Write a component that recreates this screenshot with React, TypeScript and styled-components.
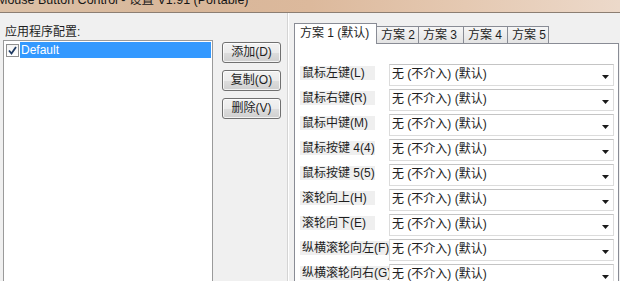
import React from "react";
import styled, { createGlobalStyle } from "styled-components";

const Global = createGlobalStyle`
  html, body { margin: 0; padding: 0; width: 620px; height: 281px; overflow: hidden; background: #f0f0f0; }
  body { font-family: "Liberation Sans", "Noto Sans CJK SC", sans-serif; font-size: 12px; color: #1e1e1e; }
  * { box-sizing: border-box; }
`;

const Window = styled.div`
  width: 620px;
  height: 281px;
  display: flex;
  flex-direction: column;
  overflow: hidden;
  background: #f0f0f0;
`;

const TitleBar = styled.div`
  height: 13px;
  flex: none;
  overflow: hidden;
  background: linear-gradient(to right, #dcc1a7 0%, #d7b699 30%, #dcb99c 50%, #e5c9b2 75%, #ecd9ca 100%);
  border-bottom: 1px solid #8c7e72;
`;

const TitleText = styled.div`
  margin: -6px 0 0 -3px;
  font-size: 12.5px;
  line-height: 12px;
  white-space: nowrap;
  color: #161616;
`;

const Body = styled.div`
  flex: 1;
  min-height: 0;
  display: flex;
  overflow: hidden;
`;

const LeftPane = styled.div`
  width: 289px;
  flex: none;
  display: flex;
  flex-direction: column;
  padding: 12px 0 0 3px;
  border-right: 1px solid #ffffff;
  box-shadow: inset -1px 0 0 #d4d4d4;
  overflow: hidden;
`;

const GroupLabel = styled.div`
  margin: 0 0 1px 2px;
  height: 14px;
  line-height: 14px;
  white-space: nowrap;
`;

const LeftBody = styled.div`
  display: flex;
  gap: 9px;
  flex: none;
`;

const ListBox = styled.div`
  width: 210px;
  height: 260px;
  flex: none;
  background: #ffffff;
  border: 1px solid #9a9a9a;
  padding-top: 1px;
`;

const ListRow = styled.div`
  display: flex;
  align-items: center;
  height: 16px;
`;

const CheckBox = styled.span`
  width: 13px;
  height: 13px;
  margin: 1px 1px 0 2px;
  flex: none;
  border: 1px solid #8f8f8f;
  background: linear-gradient(#f4f4f4, #ffffff);
  display: flex;
  align-items: center;
  justify-content: center;
`;

const RowText = styled.span<{ $selected?: boolean }>`
  flex: 1;
  height: 16px;
  margin-right: 1px;
  padding-left: 1px;
  line-height: 16px;
  background: ${(p) => (p.$selected ? "#3399ff" : "transparent")};
  color: ${(p) => (p.$selected ? "#ffffff" : "#1e1e1e")};
`;

const ButtonCol = styled.div`
  display: flex;
  flex-direction: column;
  gap: 7px;
  padding-top: 2px;
`;

const Button = styled.button`
  width: 59px;
  height: 21px;
  padding: 0;
  font: inherit;
  font-size: 12px;
  line-height: 19px;
  color: #1e1e1e;
  border: 1px solid #707070;
  border-radius: 3px;
  background: linear-gradient(#f2f2f2 0%, #ebebeb 50%, #dddddd 51%, #cfcfcf 100%);
  box-shadow: inset 0 0 0 1px rgba(255, 255, 255, 0.75);
`;

const RightPane = styled.div`
  flex: 1;
  display: flex;
  flex-direction: column;
  padding: 10px 1px 0 5px;
  overflow: hidden;
`;

const TabStrip = styled.div`
  display: flex;
  align-items: flex-end;
  height: 21px;
  margin-bottom: -1px;
  position: relative;
  z-index: 1;
`;

const Tab = styled.div<{ $active?: boolean; $w: number }>`
  width: ${(p) => p.$w}px;
  flex: none;
  height: ${(p) => (p.$active ? 21 : 17)}px;
  margin-bottom: ${(p) => (p.$active ? 0 : 1)}px;
  margin-left: ${(p) => (p.$active ? 0 : -1)}px;
  border: 1px solid #898c95;
  border-bottom: none;
  background: ${(p) => (p.$active ? "#ffffff" : "linear-gradient(#f6f6f6, #e3e3e3)")};
  padding-left: ${(p) => (p.$active ? 5 : 4)}px;
  line-height: ${(p) => (p.$active ? 19 : 16)}px;
  white-space: nowrap;
  position: relative;
  z-index: ${(p) => (p.$active ? 2 : 1)};
`;

const Panel = styled.div`
  height: 260px;
  flex: none;
  background: #ffffff;
  border: 1px solid #898c95;
  padding: 20px 4px 0 5px;
  display: flex;
  flex-direction: column;
  gap: 3px;
`;

const Row = styled.div`
  display: flex;
  height: 22px;
  flex: none;
`;

const LabelCell = styled.div`
  width: 89px;
  flex: none;
  padding-top: 2px;
`;

const LabelText = styled.span`
  display: inline-block;
  min-width: 75px;
  height: 14px;
  line-height: 14px;
  padding-left: 2px;
  background: #efefef;
  white-space: nowrap;
`;

const Combo = styled.div`
  flex: 1;
  display: flex;
  justify-content: space-between;
  align-items: center;
  border: 1px solid #dcdcdc;
  border-top-color: #c4c4c4;
  padding: 0 4px 0 2px;
  background: #ffffff;
`;

const ComboText = styled.span`
  line-height: 16px;
  margin-top: -3px;
  white-space: nowrap;
`;

const Arrow = styled.svg`
  margin-top: 4px;
  flex: none;
`;

const tabs = [
  { label: "方案 1 (默认)", w: 83, active: true },
  { label: "方案 2", w: 43 },
  { label: "方案 3", w: 46 },
  { label: "方案 4", w: 45 },
  { label: "方案 5", w: 42 },
];

const rows = [
  "鼠标左键(L)",
  "鼠标右键(R)",
  "鼠标中键(M)",
  "鼠标按键 4(4)",
  "鼠标按键 5(5)",
  "滚轮向上(H)",
  "滚轮向下(E)",
  "纵横滚轮向左(F)",
  "纵横滚轮向右(G)",
];

export default function App() {
  return (
    <Window>
      <Global />
      <TitleBar>
        <TitleText>Mouse Button Control - 设置 V1.91 (Portable)</TitleText>
      </TitleBar>
      <Body>
        <LeftPane>
          <GroupLabel>应用程序配置:</GroupLabel>
          <LeftBody>
            <ListBox>
              <ListRow>
                <CheckBox>
                  <svg width="9" height="9" viewBox="0 0 9 9">
                    <path d="M1 4.5 L3.5 7.5 L8 1" fill="none" stroke="#1f3b63" strokeWidth="1.8" />
                  </svg>
                </CheckBox>
                <RowText $selected>Default</RowText>
              </ListRow>
            </ListBox>
            <ButtonCol>
              <Button>添加(D)</Button>
              <Button>复制(O)</Button>
              <Button>删除(V)</Button>
            </ButtonCol>
          </LeftBody>
        </LeftPane>
        <RightPane>
          <TabStrip>
            {tabs.map((t) => (
              <Tab key={t.label} $active={t.active} $w={t.w}>
                {t.label}
              </Tab>
            ))}
          </TabStrip>
          <Panel>
            {rows.map((r) => (
              <Row key={r}>
                <LabelCell>
                  <LabelText>{r}</LabelText>
                </LabelCell>
                <Combo>
                  <ComboText>无 (不介入) (默认)</ComboText>
                  <Arrow width="7" height="4" viewBox="0 0 7 4">
                    <path d="M0 0 H7 L3.5 4 Z" fill="#1a1a1a" />
                  </Arrow>
                </Combo>
              </Row>
            ))}
          </Panel>
        </RightPane>
      </Body>
    </Window>
  );
}
